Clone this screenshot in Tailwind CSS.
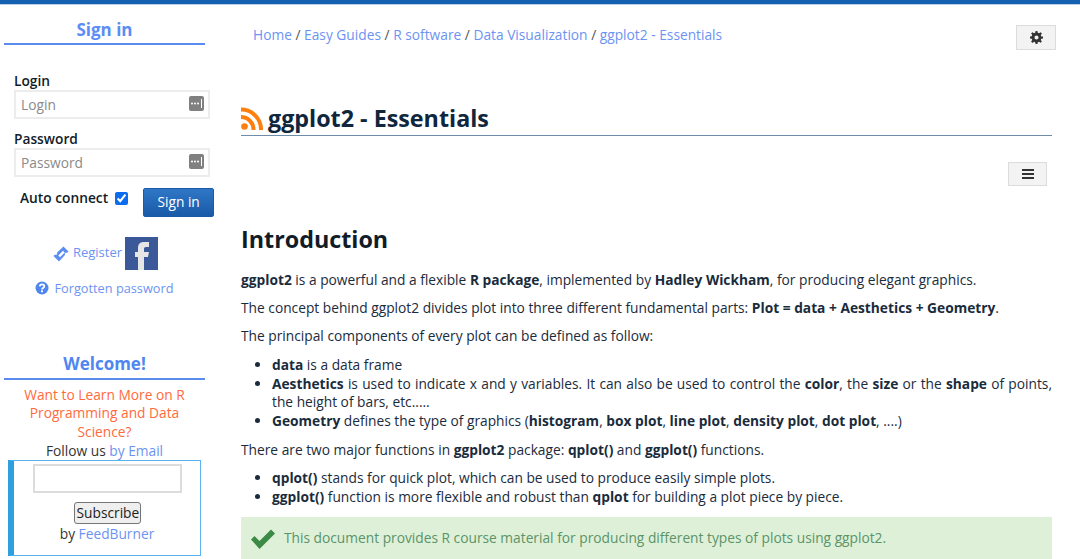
<!DOCTYPE html>
<html lang="en">
<head>
    <meta charset="UTF-8">
    <title>ggplot2 - Essentials</title>
    <script src="https://cdn.jsdelivr.net/npm/@tailwindcss/browser@4"></script>
</head>
<body class="bg-white h-[559px] overflow-hidden font-['Open_Sans',sans-serif] text-[13.75px] leading-[18.7px] text-[#1a2b3c]">
<div class="h-[5px] bg-[#1560b0] border-b border-[#b9d0ea]"></div>
<div class="flex h-[554px] overflow-hidden">
    <!-- sidebar -->
    <aside class="w-[230px] shrink-0 pl-[4px] flex flex-col">
        <div class="w-[201px] h-[40px] border-b-2 border-[#5a8cf0] text-center text-[17px] font-bold text-[#5b8df5] pt-[12px] leading-[25px]">Sign in</div>
        <form class="pl-[10px] mt-[26px]">
            <label class="block font-semibold leading-[19px] text-[#111c28]">Login</label>
            <div class="w-[196px] h-[29px] border-2 border-[#ececec] flex items-center justify-between pl-[5px] pr-[4px] text-[#8a8a8a]">
                <span class="mt-[1px]">Login</span>
                <svg class="w-[15px] h-[15px] mb-[3px]" viewBox="0 0 15 15"><rect width="15" height="15" rx="2" fill="#808080"/><g fill="#fff"><circle cx="3" cy="7.5" r="1"/><circle cx="6" cy="7.5" r="1"/><circle cx="9" cy="7.5" r="1"/><rect x="12" y="3" width="1" height="9"/></g></svg>
            </div>
            <label class="block font-semibold leading-[19px] text-[#111c28] mt-[10px]">Password</label>
            <div class="w-[196px] h-[29px] border-2 border-[#ececec] flex items-center justify-between pl-[5px] pr-[4px] text-[#8a8a8a]">
                <span class="mt-[1px]">Password</span>
                <svg class="w-[15px] h-[15px] mb-[3px]" viewBox="0 0 15 15"><rect width="15" height="15" rx="2" fill="#808080"/><g fill="#fff"><circle cx="3" cy="7.5" r="1"/><circle cx="6" cy="7.5" r="1"/><circle cx="9" cy="7.5" r="1"/><rect x="12" y="3" width="1" height="9"/></g></svg>
            </div>
            <div class="flex items-start mt-[9px] pb-[1px] pl-[6px]">
                <span class="font-semibold leading-[20px] mt-[2px] text-[#111c28] whitespace-nowrap">Auto connect</span>
                <input type="checkbox" checked class="w-[13px] h-[13px] ml-[7px] mt-[6px] accent-[#0b6cf0]">
                <button type="button" class="ml-[15px] w-[71px] h-[29px] rounded-[2px] bg-gradient-to-b from-[#2f77c6] to-[#1a5aa8] text-white border border-[#1a5aa8] mt-[2px]">Sign in</button>
            </div>
        </form>
        <div class="w-[201px] mt-[19px] flex items-center justify-center text-[13px] text-[#6d93f2] ml-[1px]">
            <svg class="w-[16px] h-[16px] mr-[4px]" viewBox="0 0 16 16"><path fill="#5b8df5" fill-rule="evenodd" d="M10.500 .5l5 5-1.500 1.500a1.200 1.200 0 0 0-1.800 1.800L6 15.500 .5 10l1.500-1.500a1.200 1.200 0 0 0 1.800-1.800zM10 4.800L5.300 9.500 7 11.200 11.700 6.500z"/></svg>
            <span class="mb-[2px]">Register</span>
            <svg class="w-[33px] h-[33px] ml-[3px]" viewBox="0 0 33 33"><rect width="33" height="33" fill="#3b5998"/><path fill="#e6e6e6" d="M13 33V20h-3v-5h3v-4c0-4 2-6 6-6h5v5h-3c-1.500 0-2 .7-2 2v3h5l-1 5h-4v13z"/></svg>
        </div>
        <div class="w-[201px] mt-[9px] flex items-center justify-center text-[12.75px] text-[#6d93f2]">
            <svg class="w-[14px] h-[14px] mr-[5px]" viewBox="0 0 14 14"><circle cx="7" cy="7" r="6.500" fill="#4f86ef"/><path fill="none" stroke="#fff" stroke-width="1.800" d="M4.800 5.300C5 3.900 6 3.400 7 3.400c1.300 0 2.300.8 2.300 1.900 0 1.800-2.300 1.600-2.300 3.200"/><rect x="6" y="9.400" width="2" height="1.800" fill="#fff"/></svg>
            <span>Forgotten password</span>
        </div>
        <div class="w-[201px] h-[28px] mt-[54px] border-b-2 border-[#5a8cf0] text-center text-[17px] font-bold text-[#4f86ef] leading-[24px]">Welcome!</div>
        <div class="w-[201px] text-center mt-[6px]">
            <p class="text-[#ff6a3c] px-[14px]">Want to Learn More on R Programming and Data Science?</p>
            <p class="text-[#333]">Follow us <a class="text-[#6d93f2]">by Email</a></p>
        </div>
        <div class="ml-[4px] -mt-[1px] w-[193px] h-[96px] border border-[#5ab4ee] border-l-[6px] border-l-[#2f9fe0] text-center flex flex-col items-center text-[#333]">
            <input type="text" class="block w-[149px] h-[29px] border-2 border-[#dcdcdc] mt-[3px]">
            <button type="button" class="block mt-[9px] h-[22px] px-[2px] w-[67px] bg-[#efefef] border border-[#767676] rounded-[3px] text-[#222] leading-[18px]">Subscribe</button>
            <p class="leading-[19px]">by <a class="text-[#6d93f2]">FeedBurner</a></p>
        </div>
    </aside>
    <!-- content -->
    <main class="w-[850px] relative">
        <nav class="ml-[23px] mt-[21px] text-[#6d93f2]">
            <a>Home</a> <span class="text-[#555]">/</span> <a>Easy Guides</a> <span class="text-[#555]">/</span> <a>R software</a> <span class="text-[#555]">/</span> <a>Data Visualization</a> <span class="text-[#555]">/</span> <a>ggplot2 - Essentials</a>
        </nav>
        <button type="button" class="absolute left-[786px] top-[20px] w-[40px] h-[25px] bg-[#f3f3f3] border border-[#dcdcdc] flex items-center justify-center">
            <svg class="w-[13px] h-[13px]" viewBox="0 0 14 14"><path fill="#333" fill-rule="evenodd" d="M6 0h2l.4 2 1.300.5L11.400 1.400 12.800 2.800 11.600 4.500l.5 1.300L14 6v2l-1.900.3-.5 1.300 1.200 1.700-1.400 1.400-1.700-1.200-1.300.5L8 14H6l-.4-1.900-1.300-.5-1.700 1.200-1.400-1.400 1.200-1.700-.5-1.300L0 8V6l1.900-.3.5-1.300L1.200 2.800 2.600 1.400l1.700 1.100 1.300-.5zM7 4.800a2.200 2.200 0 1 0 0 4.400 2.200 2.200 0 0 0 0-4.400z"/></svg>
        </button>
        <div class="ml-[11px] w-[811px] mt-[50px] border-b border-[#6f8cab] h-[41px] flex items-center pt-[6px]">
            <svg class="w-[22px] h-[23px] mr-[5px] mt-[2px]" viewBox="0 0 22 23"><circle cx="3.500" cy="19.500" r="3.300" fill="#ff7f0e"/><path fill="none" stroke="#ff7f0e" stroke-width="4" d="M0 10a12.500 12.500 0 0 1 12.500 13M0 2.500a20 20 0 0 1 20 20.500"/></svg>
            <h1 class="text-[23.3px] font-bold leading-[32px] text-[#10263c]">ggplot2 - Essentials</h1>
        </div>
        <button type="button" class="absolute left-[778px] top-[157px] w-[39px] h-[24px] bg-[#f3f3f3] border border-[#dcdcdc] flex flex-col items-center justify-center gap-[2px]">
            <span class="w-[12px] h-[2px] bg-[#333]"></span><span class="w-[12px] h-[2px] bg-[#333]"></span><span class="w-[12px] h-[2px] bg-[#333]"></span>
        </button>
        <h2 class="ml-[11px] mt-[87px] text-[23.3px] font-bold leading-[32px] text-[#111c28]">Introduction</h2>
        <div class="ml-[11px] w-[811px] mt-[16px] text-[#1a2b3c] text-justify">
            <p><b class="font-bold">ggplot2</b> is a powerful and a flexible <b class="font-bold">R package</b>, implemented by <b class="font-bold">Hadley Wickham</b>, for producing elegant graphics.</p>
            <p class="mt-[9.3px]">The concept behind ggplot2 divides plot into three different fundamental parts: <b class="font-bold">Plot = data + Aesthetics + Geometry</b>.</p>
            <p class="mt-[9.3px]">The principal components of every plot can be defined as follow:</p>
            <ul class="list-disc pl-[31px] mt-[10.6px]">
                <li><b class="font-bold">data</b> is a data frame</li>
                <li><b class="font-bold">Aesthetics</b> is used to indicate x and y variables. It can also be used to control the <b class="font-bold">color</b>, the <b class="font-bold">size</b> or the <b class="font-bold">shape</b> of points, the height of bars, etc.....</li>
                <li><b class="font-bold">Geometry</b> defines the type of graphics (<b class="font-bold">histogram</b>, <b class="font-bold">box plot</b>, <b class="font-bold">line plot</b>, <b class="font-bold">density plot</b>, <b class="font-bold">dot plot</b>, ....)</li>
            </ul>
            <p class="mt-[10px]">There are two major functions in <b class="font-bold">ggplot2</b> package: <b class="font-bold">qplot()</b> and <b class="font-bold">ggplot()</b> functions.</p>
            <ul class="list-disc pl-[31px] mt-[9.3px]">
                <li><b class="font-bold">qplot()</b> stands for quick plot, which can be used to produce easily simple plots.</li>
                <li><b class="font-bold">ggplot()</b> function is more flexible and robust than <b class="font-bold">qplot</b> for building a plot piece by piece.</li>
            </ul>
        </div>
        <div class="ml-[11px] w-[811px] h-[60px] mt-[10.4px] bg-[#dff0d8] flex items-start pl-[10px] pt-[12px] text-[#5a9468]">
            <svg class="w-[24px] h-[20px] mr-[9px]" viewBox="0 0 24 20"><path fill="#3c8a45" d="M0 10.500l3.500-3.500 5 5L20 0.500 24 4.500 8.500 20z"/></svg>
            <span>This document provides R course material for producing different types of plots using ggplot2.</span>
        </div>
    </main>
</div>
</body>
</html>
